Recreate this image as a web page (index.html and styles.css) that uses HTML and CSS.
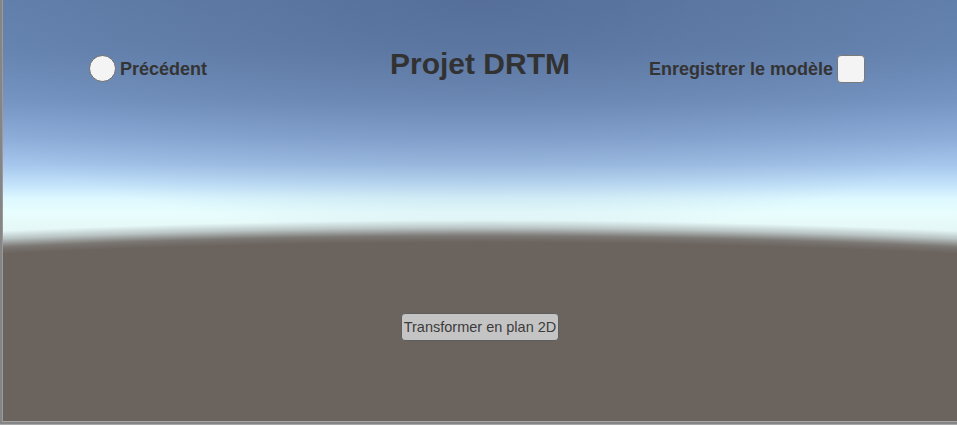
FILE: index.html
```html
<!DOCTYPE html>
<html lang="fr">
<head>
<meta charset="utf-8">
<title>Projet DRTM</title>
<link rel="stylesheet" href="styles.css">
</head>
<body>
<div class="frame">
  <main class="scene">
    <header class="topbar">
      <div class="side left">
        <span class="radio"></span>
        <span class="label">Précédent</span>
      </div>
      <h1 class="title">Projet DRTM</h1>
      <div class="side right">
        <span class="label">Enregistrer le modèle</span>
        <span class="check"></span>
      </div>
    </header>
    <div class="actions">
      <button class="btn" type="button">Transformer en plan 2D</button>
    </div>
  </main>
</div>
</body>
</html>
```
FILE: styles.css
```css
html, body {
  margin: 0;
  padding: 0;
  width: 957px;
  height: 425px;
  overflow: hidden;
}

body {
  font-family: "Liberation Sans", Arial, sans-serif;
  color: #333333;
  background: #8a8a8a;
}

.frame {
  width: 957px;
  height: 425px;
  box-sizing: border-box;
  padding-left: 2px;
  padding-bottom: 2px;
  background: #858585;
  border-bottom: 1px solid #a8a8a8;
}

.scene {
  height: 422px;
  box-sizing: border-box;
  border-bottom: 1px solid #a4a4a4;
  border-left: 1px solid #9a9a9a;
  display: flex;
  flex-direction: column;
  background:
    radial-gradient(ellipse 2900px 800px at 50% 1020px,
      #6b635e 0%, #6b635e 97.2%, rgba(112, 106, 102, 0.9) 98%, rgba(150, 155, 155, 0.55) 99%, rgba(210, 225, 225, 0) 100%),
    radial-gradient(ellipse 620px 240px at 50% 0,
      rgba(62, 82, 122, 0.42) 0%, rgba(62, 82, 122, 0) 100%),
    linear-gradient(to bottom,
      #6584b0 0px,
      #6a89b5 50px,
      #7998c5 100px,
      #90b0dc 140px,
      #a6c6ec 165px,
      #c2e2fa 184px,
      #dcf7ff 198px,
      #e8fefe 212px,
      #e6f8f8 228px,
      #dcecec 250px,
      #d8e8e8 422px);
}

.topbar {
  display: grid;
  grid-template-columns: 1fr auto 1fr;
  align-items: start;
  padding: 48px 92px 0 86px;
}

.side {
  display: flex;
  align-items: center;
  margin-top: 7px;
  height: 27px;
}

.side.left {
  justify-self: start;
  gap: 4px;
}

.side.right {
  justify-self: end;
  gap: 4px;
}

.label {
  font-size: 18px;
  font-weight: bold;
  line-height: 18px;
  color: #343434;
}

.radio {
  display: block;
  width: 25px;
  height: 25px;
  border-radius: 50%;
  background: #f4f4f4;
  border: 1px solid #6a6a6a;
}

.check {
  display: block;
  width: 26px;
  height: 26px;
  border-radius: 4px;
  background: #f4f4f4;
  border: 1px solid #7a7a7a;
}

.title {
  margin: 1px 0 0 6px;
  font-size: 30px;
  font-weight: bold;
  line-height: 30px;
  color: #323232;
}

.actions {
  display: flex;
  justify-content: center;
  margin-top: 231px;
}

.btn {
  width: 158px;
  height: 28px;
  padding: 0;
  box-sizing: border-box;
  font-family: "Liberation Sans", Arial, sans-serif;
  font-size: 14.5px;
  color: #3c3c3c;
  background: #c4c4c4;
  border: 1px solid #5e5e5e;
  border-radius: 4px;
}
```
